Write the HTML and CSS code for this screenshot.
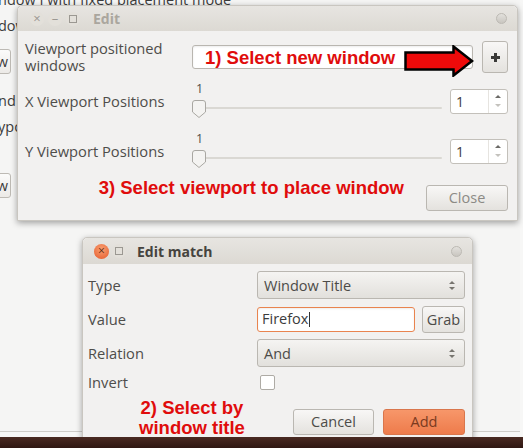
FILE: index.html
```html
<!DOCTYPE html>
<html lang="en">
<head>
    <meta charset="UTF-8">
    <title>Edit match</title>
    <link rel="stylesheet" href="styles.css">
</head>
<body>
<div class="desk">

    <!-- window in the background, mostly hidden -->
    <div class="backwin">
        <div class="bw-line bw-top">ndow I with fixed placement mode</div>
        <div class="bw-line bw-2">dow</div>
        <div class="bw-btn bw-b1">w</div>
        <div class="bw-line bw-3">nd</div>
        <div class="bw-line bw-4">ypo</div>
        <div class="bw-btn bw-b2">w</div>
    </div>

    <div class="win win-edit">
        <div class="titlebar">
            <span class="wbtn">&#215;</span>
            <span class="wbtn">&#8211;</span>
            <span class="wbtn wbtn-sq"></span>
            <span class="title">Edit</span>
            <span class="dot"></span>
        </div>
        <div class="wbody">
            <div class="row row-vp">
                <div class="label">Viewport positioned<br>windows</div>
                <div class="entry entry-vp"></div>
                <div class="btn btn-plus">
                    <svg width="9" height="9" viewBox="0 0 9 9"><path d="M3 0h3v3h3v3H6v3H3V6H0V3h3z" fill="#3a3a38"/></svg>
                </div>
            </div>
            <div class="row row-pos">
                <div class="label">X Viewport Positions</div>
                <div class="slider">
                    <span class="sval">1</span>
                    <span class="track"></span>
                    <svg class="knob" width="14" height="18" viewBox="0 0 14 18"><path d="M3 .5h8a2.5 2.5 0 0 1 2.5 2.5v9L7 17.5.5 12V3A2.5 2.5 0 0 1 3 .5z" fill="#f4f3f1" stroke="#a9a7a2"/></svg>
                </div>
                <div class="spin">
                    <span class="spin-val">1</span>
                    <span class="spin-arr">
                        <svg width="6" height="14" viewBox="0 0 6 14"><path d="M0 4l3-3 3 3z" fill="#6b6a66"/><path d="M0 10l3 3 3-3z" fill="#c4c2bd"/></svg>
                    </span>
                </div>
            </div>
            <div class="row row-pos">
                <div class="label">Y Viewport Positions</div>
                <div class="slider">
                    <span class="sval">1</span>
                    <span class="track"></span>
                    <svg class="knob" width="14" height="18" viewBox="0 0 14 18"><path d="M3 .5h8a2.5 2.5 0 0 1 2.5 2.5v9L7 17.5.5 12V3A2.5 2.5 0 0 1 3 .5z" fill="#f4f3f1" stroke="#a9a7a2"/></svg>
                </div>
                <div class="spin">
                    <span class="spin-val">1</span>
                    <span class="spin-arr">
                        <svg width="6" height="14" viewBox="0 0 6 14"><path d="M0 4l3-3 3 3z" fill="#6b6a66"/><path d="M0 10l3 3 3-3z" fill="#c4c2bd"/></svg>
                    </span>
                </div>
            </div>
            <div class="row row-close">
                <span class="note note-3">3) Select viewport to place window</span>
                <div class="btn btn-close">Close</div>
            </div>
        </div>

        <!-- annotations drawn over the dialog -->
        <span class="note note-1">1) Select new window</span>
        <svg class="arrow" width="70" height="32" viewBox="0 0 70 32"><path d="M1.5 7.5h48V1.5L68 16 49.5 30.5v-6h-48z" fill="#ee0a0a" stroke="#000" stroke-width="2.5" stroke-linejoin="miter"/></svg>
    </div>

    <div class="win win-match">
        <div class="titlebar">
            <span class="wclose">&#215;</span>
            <span class="wbtn wbtn-sq"></span>
            <span class="title title-active">Edit match</span>
            <span class="dot"></span>
        </div>
        <div class="wbody wbody-match">
            <div class="mrow">
                <div class="mlabel">Type</div>
                <div class="combo">
                    <span>Window Title</span>
                    <svg width="6" height="11" viewBox="0 0 6 11"><path d="M0 4l3-3 3 3z" fill="#77756f"/><path d="M0 7l3 3 3-3z" fill="#77756f"/></svg>
                </div>
            </div>
            <div class="mrow">
                <div class="mlabel">Value</div>
                <div class="entry entry-focus">Firefox<span class="caret"></span></div>
                <div class="btn btn-grab">Grab</div>
            </div>
            <div class="mrow mrow-last">
                <div class="mlabel">Relation</div>
                <div class="combo">
                    <span>And</span>
                    <svg width="6" height="11" viewBox="0 0 6 11"><path d="M0 4l3-3 3 3z" fill="#77756f"/><path d="M0 7l3 3 3-3z" fill="#77756f"/></svg>
                </div>
            </div>
            <div class="mrow mrow-check">
                <div class="mlabel">Invert</div>
                <span class="check"></span>
            </div>
            <div class="mrow mrow-btns">
                <div class="btn btn-cancel">Cancel</div>
                <div class="btn btn-add">Add</div>
            </div>
        </div>
        <span class="note note-2">2) Select by<br>window title</span>
    </div>

    <div class="panel"></div>
</div>
</body>
</html>
```

FILE: styles.css
```css
body {
    margin: 0;
    background-color: #f7f7f6;
    font-family: 'Open Sans', 'DejaVu Sans', sans-serif;
    overflow: hidden;
}
.desk {
    position: relative;
    width: 523px;
    height: 448px;
    overflow: hidden;
    background-color: #f7f7f6;
}

/* background window */
.backwin {
    position: absolute;
    left: -20px;
    top: 0;
    width: 540px;
    height: 431px;
    border-bottom: 1px solid #cfcdc9;
    background-color: #f5f5f4;
    color: #3c3c3c;
    font-size: 14.5px;
}
.bw-line {
    position: absolute;
    left: 18px;
    line-height: 16px;
}
.bw-top { top: -8px; }
.bw-2 { top: 18px; }
.bw-3 { top: 93px; }
.bw-4 { top: 119px; }
.bw-btn {
    position: absolute;
    left: 0;
    width: 31px;
    height: 25px;
    line-height: 24px;
    text-align: right;
    box-sizing: border-box;
    padding-right: 2px;
    border: 1px solid #bdbab4;
    border-radius: 3px;
    background: linear-gradient(#fbfbfa, #eceae7);
}
.bw-b1 { top: 49px; }
.bw-b2 { top: 173px; }

/* windows */
.win {
    position: absolute;
    background-color: #f2f1f0;
    border: 1px solid #c9c6c0;
    border-radius: 5px 5px 0 0;
    box-shadow: 0 2px 6px rgba(0, 0, 0, 0.35);
}
.win-edit {
    left: 17px;
    top: 5px;
    width: 499px;
    height: 214px;
}
.win-match {
    left: 82px;
    top: 237px;
    width: 389px;
    height: 210px;
}
.titlebar {
    display: flex;
    align-items: center;
    height: 25px;
    padding: 0 10px 0 12px;
    border-radius: 5px 5px 0 0;
    background: linear-gradient(#e7e5e1, #dcd9d3);
}
.win-match .titlebar {
    height: 26px;
    padding-left: 11px;
}
.wbtn {
    width: 14px;
    height: 14px;
    margin-right: 4px;
    line-height: 13px;
    text-align: center;
    font-size: 13px;
    color: #9b9892;
    border-radius: 50%;
    background-color: #e3e0da;
}
.wbtn-sq {
    position: relative;
}
.wbtn-sq::after {
    content: "";
    position: absolute;
    left: 3px;
    top: 3px;
    width: 6px;
    height: 6px;
    border: 1px solid #9b9892;
}
.wclose {
    width: 15px;
    height: 15px;
    margin-right: 3px;
    line-height: 14px;
    text-align: center;
    font-size: 12px;
    color: #5d2a14;
    border-radius: 50%;
    background: radial-gradient(circle at 50% 35%, #f9a173, #e5592a);
}
.title {
    margin-left: 9px;
    font-size: 14px;
    font-weight: bold;
    color: #aaa69e;
}
.title-active {
    margin-left: 7px;
    color: #45433e;
}
.dot {
    width: 9px;
    height: 9px;
    margin-left: auto;
    border-radius: 50%;
    border: 1px solid #bcb9b3;
    background: linear-gradient(#e2e0dc, #c9c6c0);
}

/* edit dialog body */
.wbody {
    padding: 10px 9px 10px 7px;
}
.row {
    display: flex;
    align-items: center;
}
.label {
    width: 167px;
    flex: none;
    font-size: 14.7px;
    line-height: 17px;
    color: #4e4d4a;
}
.row-vp {
    height: 32px;
}
.entry {
    height: 24px;
    box-sizing: border-box;
    border: 1px solid #b9b6b0;
    border-radius: 3px;
    background-color: #fff;
    box-shadow: inset 0 1px 2px rgba(0, 0, 0, 0.08);
}
.entry-vp {
    flex: 1;
}
.btn {
    box-sizing: border-box;
    border: 1px solid #bab7b1;
    border-radius: 3px;
    background: linear-gradient(#f8f7f6, #e4e2de);
    text-align: center;
    font-size: 14.5px;
    color: #4c4b48;
}
.btn-plus {
    display: flex;
    align-items: center;
    justify-content: center;
    width: 26px;
    height: 32px;
    margin-left: 9px;
}
.row-pos {
    height: 36px;
    margin-top: 10px;
}
.row-pos + .row-pos {
    margin-top: 14px;
}
.slider {
    position: relative;
    flex: 1;
    height: 36px;
}
.sval {
    position: absolute;
    left: 4px;
    top: 0;
    font-size: 12.5px;
    line-height: 12px;
    color: #4e4d4a;
}
.track {
    position: absolute;
    left: 6px;
    right: 1px;
    top: 24px;
    height: 2px;
    border-radius: 1px;
    background-color: #dad8d3;
}
.knob {
    position: absolute;
    left: 0;
    top: 17px;
}
.spin {
    display: flex;
    width: 58px;
    height: 25px;
    margin-left: 7px;
    box-sizing: border-box;
    border: 1px solid #c3c0ba;
    border-radius: 3px;
    background-color: #fff;
}
.spin-val {
    flex: 1;
    padding-left: 5px;
    font-size: 14px;
    line-height: 23px;
    color: #3c3c3c;
}
.spin-arr {
    display: flex;
    align-items: center;
    justify-content: center;
    width: 18px;
    border-left: 1px solid #e6e4e0;
}
.row-close {
    justify-content: flex-end;
    margin-top: 16px;
    height: 26px;
}
.btn-close {
    width: 82px;
    height: 26px;
    line-height: 24px;
    color: #8c8a85;
}

/* red notes */
.note {
    font-family: 'Liberation Sans', Arial, sans-serif;
    font-weight: bold;
    font-size: 18.5px;
    color: #e00c0c;
    white-space: nowrap;
}
.note-3 {
    margin-right: 22px;
    margin-bottom: 20px;
}
.note-1 {
    position: absolute;
    left: 187px;
    top: 41px;
}
.arrow {
    position: absolute;
    left: 386px;
    top: 39px;
}
.note-2 {
    position: absolute;
    left: 47px;
    top: 160px;
    width: 124px;
    text-align: center;
    line-height: 20px;
}

/* edit match body */
.wbody-match {
    padding: 7px 7px 0 5px;
}
.mrow {
    display: flex;
    align-items: center;
    height: 28px;
    margin-bottom: 6px;
}
.mrow-last {
    margin-bottom: 0;
}
.mlabel {
    width: 169px;
    flex: none;
    font-size: 14.7px;
    color: #4e4d4a;
}
.combo {
    display: flex;
    align-items: center;
    justify-content: space-between;
    flex: 1;
    height: 28px;
    box-sizing: border-box;
    padding: 0 9px 0 6px;
    border: 1px solid #bab7b1;
    border-radius: 3px;
    background: linear-gradient(#f5f4f2, #e2e0dc);
    font-size: 14.5px;
    color: #4c4b48;
}
.entry-focus {
    flex: 1;
    height: 25px;
    padding-left: 4px;
    border-color: #e9844f;
    font-size: 14.5px;
    line-height: 22px;
    color: #3c3c3c;
}
.caret {
    display: inline-block;
    width: 1px;
    height: 15px;
    margin-left: 1px;
    vertical-align: -3px;
    background-color: #333;
}
.btn-grab {
    width: 43px;
    height: 27px;
    margin-left: 7px;
    line-height: 25px;
}
.mrow-check {
    height: 30px;
    margin-bottom: 0;
}
.check {
    width: 13px;
    height: 13px;
    margin-left: 3px;
    border: 1px solid #aeaba5;
    border-radius: 2px;
    background-color: #fff;
}
.mrow-btns {
    justify-content: flex-end;
    margin-top: 12px;
    height: 26px;
}
.btn-cancel {
    width: 81px;
    height: 26px;
    line-height: 24px;
    margin-right: 9px;
}
.btn-add {
    width: 82px;
    height: 26px;
    line-height: 24px;
    border-color: #d9764c;
    background: linear-gradient(#f7976a, #ee7b4b);
    color: #7a3a1e;
}

/* bottom panel */
.panel {
    position: absolute;
    left: 0;
    right: 0;
    bottom: 0;
    height: 11px;
    background: linear-gradient(#4a2a22, #2f1712);
}
```
